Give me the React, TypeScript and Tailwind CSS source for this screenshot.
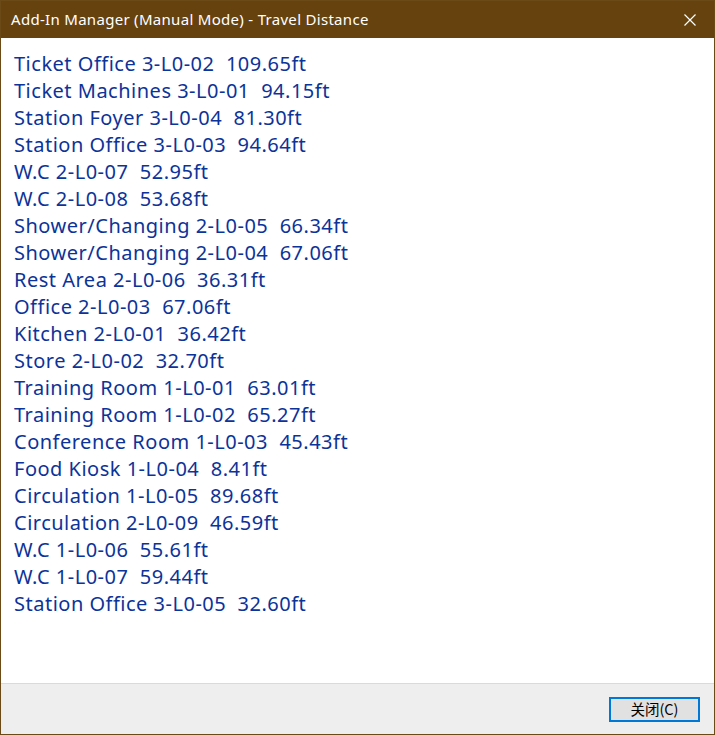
const rows = [
  "Ticket Office 3-L0-02  109.65ft",
  "Ticket Machines 3-L0-01  94.15ft",
  "Station Foyer 3-L0-04  81.30ft",
  "Station Office 3-L0-03  94.64ft",
  "W.C 2-L0-07  52.95ft",
  "W.C 2-L0-08  53.68ft",
  "Shower/Changing 2-L0-05  66.34ft",
  "Shower/Changing 2-L0-04  67.06ft",
  "Rest Area 2-L0-06  36.31ft",
  "Office 2-L0-03  67.06ft",
  "Kitchen 2-L0-01  36.42ft",
  "Store 2-L0-02  32.70ft",
  "Training Room 1-L0-01  63.01ft",
  "Training Room 1-L0-02  65.27ft",
  "Conference Room 1-L0-03  45.43ft",
  "Food Kiosk 1-L0-04  8.41ft",
  "Circulation 1-L0-05  89.68ft",
  "Circulation 2-L0-09  46.59ft",
  "W.C 1-L0-06  55.61ft",
  "W.C 1-L0-07  59.44ft",
  "Station Office 3-L0-05  32.60ft",
]

const App = () => {
  return (
    <div className="w-[715px] h-[735px] flex flex-col border border-[#6b4a17] bg-white font-['Noto_Sans','Noto_Sans_CJK_SC',sans-serif]">
      <div className="h-[37px] shrink-0 flex items-center justify-between bg-[#66420f] text-white">
        <span className="pl-[10px] text-[15px] tracking-[0.3px]">Add-In Manager (Manual Mode) - Travel Distance</span>
        <svg className="mr-[18px]" width="12" height="12" viewBox="0 0 12 12">
          <path d="M0.5 0.5 L11.5 11.5 M11.5 0.5 L0.5 11.5" stroke="white" strokeWidth="1.2" />
        </svg>
      </div>

      <div className="flex-1 pt-[12px] pl-[13px]">
        {rows.map((r) => (
          <div key={r} className="h-[27px] leading-[27px] text-[20px] tracking-[0.5px] text-[#0c3399] whitespace-pre">
            {r}
          </div>
        ))}
      </div>

      <div className="h-[51px] shrink-0 border-t border-[#dadada] bg-[#eeeeee] flex items-center justify-end pr-[14px]">
        <button className="w-[91px] h-[25px] border-2 border-[#0078d7] bg-[#e1e1e1] text-[14.5px] text-black font-['Noto_Sans_CJK_SC',sans-serif] leading-none">
          关闭(C)
        </button>
      </div>
    </div>
  )
}

export default App
